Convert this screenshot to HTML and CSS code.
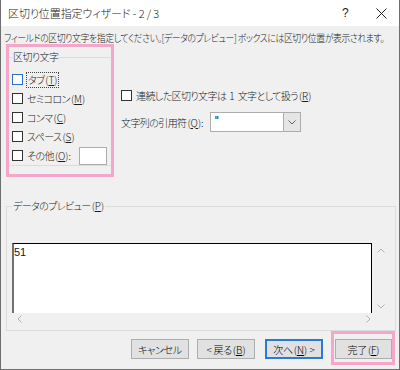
FILE: index.html
```html
<!DOCTYPE html>
<html>
  <head>
    <title>区切り位置指定ウィザード</title>
    <link rel="stylesheet" href="styles.css">
  </head>
  <body>
    <div class="window">
      <div class="titlebar">
        <span class="title">区切り位置指定ウィザード - 2 / 3</span>
        <span class="title-btn help">?</span>
        <span class="title-btn close">
          <svg width="11" height="11" viewBox="0 0 11 11"><path d="M0.5 0.5 L10.5 10.5 M10.5 0.5 L0.5 10.5" stroke="#222" stroke-width="1" fill="none"/></svg>
        </span>
      </div>
      <div class="content">
        <p class="intro">フィールドの区切り文字を指定してください。[データのプレビュー] ボックスには区切り位置が表示されます。</p>
        <div class="options">
          <div class="mark mark-group">
            <fieldset class="group delimiters">
              <legend>区切り文字</legend>
              <label class="row"><span class="check focused"></span><span class="focus-text">タブ<span class="key">(<u>T</u>)</span></span></label>
              <label class="row"><span class="check"></span>セミコロン<span class="key">(<u>M</u>)</span></label>
              <label class="row"><span class="check"></span>コンマ<span class="key">(<u>C</u>)</span></label>
              <label class="row"><span class="check"></span>スペース<span class="key">(<u>S</u>)</span></label>
              <label class="row"><span class="check"></span>その他<span class="key">(<u>O</u>):</span><span class="other-box"></span></label>
            </fieldset>
          </div>
          <div class="side">
            <label class="row"><span class="check"></span>連続した区切り文字は<span class="num">1</span>文字として扱う<span class="key">(<u>R</u>)</span></label>
            <div class="row quote">
              <span>文字列の引用符<span class="key">(<u>Q</u>):</span></span>
              <span class="combo">
                <span class="combo-value">"</span>
                <span class="combo-btn">
                  <svg width="8" height="5" viewBox="0 0 8 5"><path d="M0.5 0.5 L4 4 L7.5 0.5" stroke="#606060" stroke-width="1" fill="none"/></svg>
                </span>
              </span>
            </div>
          </div>
        </div>
        <fieldset class="group preview">
          <legend>データのプレビュー<span class="key">(<u>P</u>)</span></legend>
          <div class="preview-area">
            <div class="preview-top">
              <div class="preview-box">51</div>
              <div class="vscroll">
                <svg width="8" height="5" viewBox="0 0 8 5"><path d="M0.5 4.5 L4 1 L7.5 4.5" stroke="#b0b0b0" stroke-width="1" fill="none"/></svg>
                <svg width="8" height="5" viewBox="0 0 8 5"><path d="M0.5 0.5 L4 4 L7.5 0.5" stroke="#b0b0b0" stroke-width="1" fill="none"/></svg>
              </div>
            </div>
            <div class="hscroll">
              <svg width="5" height="8" viewBox="0 0 5 8"><path d="M4.5 0.5 L1 4 L4.5 7.5" stroke="#b0b0b0" stroke-width="1" fill="none"/></svg>
              <svg width="5" height="8" viewBox="0 0 5 8"><path d="M0.5 0.5 L4 4 L0.5 7.5" stroke="#b0b0b0" stroke-width="1" fill="none"/></svg>
            </div>
          </div>
        </fieldset>
        <div class="buttons">
          <button class="btn">キャンセル</button>
          <button class="btn">&lt; 戻る<span class="key">(<u>B</u>)</span></button>
          <button class="btn default">次へ<span class="key">(<u>N</u>) &gt;</span></button>
          <div class="mark mark-finish">
            <button class="btn">完了<span class="key">(<u>F</u>)</span></button>
          </div>
        </div>
      </div>
    </div>
  </body>
</html>
```

FILE: styles.css
```css
body {
  margin: 0;
  font-family: "Noto Sans CJK JP", "Noto Sans", sans-serif;
  font-size: 10px;
  font-weight: 300;
  letter-spacing: -0.6px;
  font-feature-settings: "palt";
  color: #1a1a1a;
}
.key {
  letter-spacing: 0;
  margin-left: 1px;
}
.num {
  letter-spacing: 0;
  margin: 0 3px;
}
.window {
  width: 400px;
  height: 370px;
  box-sizing: border-box;
  background-color: #f0f0f0;
  border: 1px solid #6e6e6e;
  border-top: none;
  display: flex;
  flex-direction: column;
}
.titlebar {
  height: 26px;
  flex: none;
  background-color: #fff;
  display: flex;
  align-items: center;
  padding-left: 7px;
}
.title {
  font-size: 11px;
  letter-spacing: -0.1px;
  flex: 1;
}
.title-btn {
  width: 36px;
  height: 26px;
  display: flex;
  align-items: center;
  justify-content: center;
}
.help {
  font-size: 12px;
  font-family: "Liberation Sans", sans-serif;
}
.content {
  flex: 1;
  display: flex;
  flex-direction: column;
}
.intro {
  margin: 4px 0 0 3px;
  height: 16px;
  line-height: 16px;
  white-space: nowrap;
  letter-spacing: -0.5px;
  transform: scaleX(0.89);
  transform-origin: left center;
}
.options {
  display: flex;
  gap: 7px;
  margin-top: -2px;
}
.mark {
  border: 3px solid #f4a7c8;
}
.mark-group {
  margin-left: 5px;
  width: 102px;
  padding-bottom: 8px;
}
.group {
  margin: 0;
  padding: 0;
  min-width: 0;
  border: 1px solid #dcdcdc;
}
.group legend {
  padding: 0 1px;
  margin-left: 0;
  line-height: 14px;
}
.delimiters {
  margin-top: 3px;
  padding: 6px 0 0 2px;
  border-left-color: transparent;
  border-right-color: transparent;
}
.row {
  display: flex;
  align-items: center;
  height: 19px;
  white-space: nowrap;
}
.check {
  width: 11px;
  height: 11px;
  box-sizing: border-box;
  border: 1px solid #333;
  background-color: #fff;
  margin-right: 4px;
  flex: none;
}
.check.focused {
  border-color: #2a6fc9;
}
.focus-text {
  outline: 1px dotted #444;
  outline-offset: 0;
  padding: 0 1px;
  line-height: 14px;
}
.other-box {
  width: 28px;
  height: 18px;
  box-sizing: border-box;
  margin-left: 8px;
  background-color: #fff;
  border: 1px solid #adadad;
}
.side {
  display: flex;
  flex-direction: column;
  gap: 7px;
  padding-top: 42px;
}
.quote {
  height: 20px;
  gap: 6px;
}
.combo {
  width: 91px;
  height: 20px;
  box-sizing: border-box;
  border: 1px solid #adadad;
  background-color: #fff;
  display: flex;
}
.combo-value {
  flex: 1;
  padding-left: 4px;
  line-height: 16px;
  font-family: "DejaVu Sans", sans-serif;
  font-weight: normal;
  color: #000;
}
.combo-btn {
  width: 16px;
  background-color: #e5e5e5;
  border-left: 1px solid #adadad;
  display: flex;
  align-items: center;
  justify-content: center;
}
.preview {
  margin: 22px 3px 0 5px;
  padding: 30px 6px 6px 5px;
}
.preview-top {
  display: flex;
}
.preview-box {
  width: 359px;
  height: 69px;
  background-color: #fff;
  border-top: 1px solid #000;
  border-left: 2px solid #707070;
  border-right: 1px solid #000;
  line-height: 16px;
  padding-left: 0;
  font-family: "Liberation Sans", sans-serif;
  font-size: 11px;
  letter-spacing: 0;
}
.vscroll {
  width: 17px;
  display: flex;
  flex-direction: column;
  align-items: center;
  justify-content: space-between;
  padding: 5px 0 4px;
}
.hscroll {
  height: 11px;
  width: 363px;
  display: flex;
  align-items: center;
  justify-content: space-between;
  padding: 0 4px 0 5px;
  box-sizing: border-box;
}
.buttons {
  display: flex;
  justify-content: flex-end;
  align-items: flex-start;
  gap: 8px;
  padding: 0 4px 0 0;
}
.btn {
  width: 58px;
  height: 20px;
  margin-top: 8px;
  padding: 0;
  font-family: inherit;
  font-size: 10px;
  font-weight: 300;
  letter-spacing: -0.3px;
  font-feature-settings: "palt";
  background-color: #e1e1e1;
  border: 1px solid #adadad;
  color: #000;
}
.btn.default {
  border: 2px solid #2b7ad4;
  margin-left: 2px;
}
.mark-finish {
  padding: 5px 0 3px 1px;
}
.mark-finish .btn {
  margin-top: 0;
  width: 57px;
}
```
